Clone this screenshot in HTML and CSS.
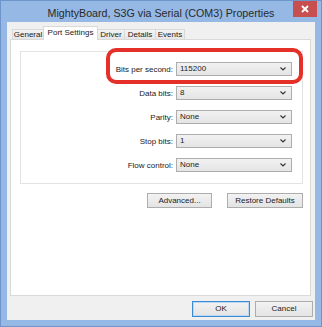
FILE: index.html
```html
<!DOCTYPE html>
<html>
<head>
<meta charset="utf-8">
<link rel="stylesheet" href="styles.css">
</head>
<body>
<div class="window">
  <div class="titlebar">
    <span class="title">MightyBoard, S3G via Serial (COM3) Properties</span>
    <div class="close"><svg width="8" height="8" viewBox="0 0 8 8"><path d="M1 1 L7 7 M7 1 L1 7" stroke="#fff" stroke-width="1.8" fill="none"/></svg></div>
  </div>
  <div class="client">
    <div class="tabs">
      <div class="tab t-general">General</div>
      <div class="tab active t-port">Port Settings</div>
      <div class="tab t-driver">Driver</div>
      <div class="tab t-details">Details</div>
      <div class="tab t-events">Events</div>
    </div>
    <div class="panel">
      <div class="group">
        <label class="lbl">Bits per second:</label>
        <div class="combo"><span>115200</span><svg class="chev" width="6" height="4" viewBox="0 0 6 4"><path d="M0.5 0.5 L3 3 L5.5 0.5" stroke="#333" stroke-width="1.1" fill="none"/></svg></div>
        <label class="lbl">Data bits:</label>
        <div class="combo"><span>8</span><svg class="chev" width="6" height="4" viewBox="0 0 6 4"><path d="M0.5 0.5 L3 3 L5.5 0.5" stroke="#333" stroke-width="1.1" fill="none"/></svg></div>
        <label class="lbl">Parity:</label>
        <div class="combo"><span>None</span><svg class="chev" width="6" height="4" viewBox="0 0 6 4"><path d="M0.5 0.5 L3 3 L5.5 0.5" stroke="#333" stroke-width="1.1" fill="none"/></svg></div>
        <label class="lbl">Stop bits:</label>
        <div class="combo"><span>1</span><svg class="chev" width="6" height="4" viewBox="0 0 6 4"><path d="M0.5 0.5 L3 3 L5.5 0.5" stroke="#333" stroke-width="1.1" fill="none"/></svg></div>
        <label class="lbl">Flow control:</label>
        <div class="combo"><span>None</span><svg class="chev" width="6" height="4" viewBox="0 0 6 4"><path d="M0.5 0.5 L3 3 L5.5 0.5" stroke="#333" stroke-width="1.1" fill="none"/></svg></div>
      </div>
      <div class="actions">
        <button class="btn b-adv">Advanced...</button>
        <button class="btn b-restore">Restore Defaults</button>
      </div>
    </div>
    <div class="footer">
      <button class="btn b-foot default">OK</button>
      <button class="btn b-foot">Cancel</button>
    </div>
  </div>
  <div class="highlight"></div>
</div>
</body>
</html>
```

FILE: styles.css
```css
* { box-sizing: border-box; }
html, body { margin: 0; padding: 0; }
body {
  width: 322px;
  height: 327px;
  overflow: hidden;
  font-family: "Liberation Sans", Arial, sans-serif;
  font-size: 8px;
  color: #1b1b1b;
}
.window {
  position: relative;
  width: 322px;
  height: 327px;
  background: #95b8e4;
  border: 1px solid #6d95c9;
  padding: 0 6px 6px 6px;
  display: flex;
  flex-direction: column;
}
.titlebar {
  height: 21px;
  display: flex;
  align-items: center;
  justify-content: center;
  position: relative;
}
.title {
  font-size: 10.7px;
  color: #2a2a2a;
  padding-top: 2px;
}
.close {
  position: absolute;
  right: -2px;
  top: 0;
  width: 24px;
  height: 16px;
  background: #c74f4f;
  display: flex;
  align-items: center;
  justify-content: center;
}
.client {
  height: 298px;
  background: #f0f0f0;
  padding: 0 4px 3px 3px;
  display: flex;
  flex-direction: column;
}
.tabs {
  height: 17px;
  display: flex;
  align-items: flex-end;
  padding-left: 2px;
  position: relative;
  z-index: 1;
}
.tab {
  height: 10px;
  line-height: 10px;
  text-align: center;
  border: 1px solid #d9d9d9;
  border-bottom: none;
  background: linear-gradient(#f3f3f3, #e6e6e6);
  margin-left: -1px;
  white-space: nowrap;
}
.tab.t-general { margin-left: 0; width: 32px; }
.tab.t-port { width: 55px; }
.tab.t-driver { width: 28px; }
.tab.t-details { width: 32px; }
.tab.t-events { width: 30px; }
.tab.active {
  height: 14px;
  margin-bottom: -1px;
  background: #fff;
  line-height: 9px;
  padding-top: 1px;
  position: relative;
  z-index: 2;
}
.panel {
  height: 257px;
  background: #fff;
  border: 1px solid #d9d9d9;
  padding: 11px 7px 0 9px;
}
.group {
  height: 133px;
  border: 1px solid #e3e3e3;
  padding: 10px 10px 0 0;
  display: grid;
  grid-template-columns: 1fr 116px;
  grid-auto-rows: 14px;
  row-gap: 10px;
  column-gap: 3px;
  align-items: center;
}
.lbl {
  text-align: right;
  white-space: nowrap;
}
.combo {
  height: 14px;
  border: 1px solid #adadad;
  background: linear-gradient(#f2f2f2, #e4e4e4);
  display: flex;
  align-items: center;
  justify-content: space-between;
  padding: 0 5px 0 3px;
}
.combo span { line-height: 12px; }
.chev { display: block; }
.actions {
  display: flex;
  justify-content: flex-end;
  gap: 15px;
  margin-top: 9px;
}
.btn {
  font-family: "Liberation Sans", Arial, sans-serif;
  font-size: 8px;
  color: #1b1b1b;
  height: 15px;
  padding: 0;
  border: 1px solid #adadad;
  background: linear-gradient(#f2f2f2, #e4e4e4);
  line-height: 13px;
  text-align: center;
}
.b-adv { width: 65px; }
.b-restore { width: 76px; }
.footer {
  display: flex;
  justify-content: flex-end;
  gap: 5px;
  margin-top: 5px;
  margin-right: -2px;
}
.b-foot { width: 58px; height: 16px; line-height: 14px; }
.btn.default {
  border-color: #3d8ad1;
  box-shadow: inset 0 0 0 1px #b8d8f5;
}
.highlight {
  position: absolute;
  left: 105px;
  top: 47px;
  width: 197px;
  height: 36px;
  border: 4px solid #e5302a;
  border-radius: 10px;
}
```
